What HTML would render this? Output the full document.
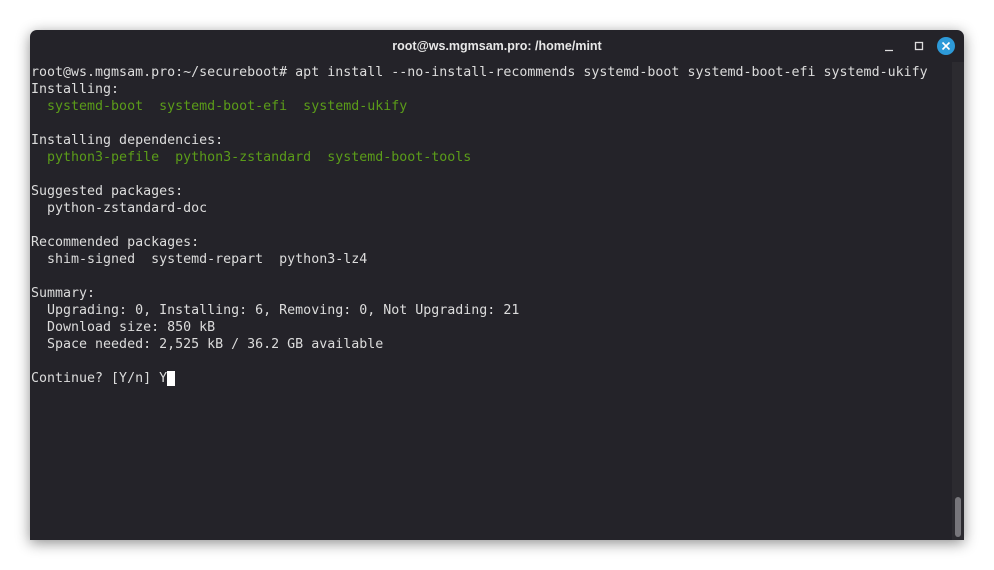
<!DOCTYPE html>
<html><head><meta charset="utf-8"><style>
html,body{margin:0;padding:0;width:994px;height:570px;background:#fff;overflow:hidden}
.win{position:absolute;left:30px;top:30px;width:934px;height:510px;background:#242329;border-radius:7px 7px 0 0;box-shadow:0 3px 14px rgba(0,0,0,.45);overflow:hidden}
.title{position:absolute;left:0;top:0;width:100%;height:32px;text-align:center;color:#e8e8e8;font:bold 12.5px "Liberation Sans",sans-serif;line-height:32px}
.sb{position:absolute;right:0;top:32px;width:12px;bottom:0;background:#2c2b30}
.thumb{position:absolute;left:3px;top:435px;width:6px;height:40px;border-radius:3px;background:#77767b}
pre{position:absolute;left:1px;top:34px;margin:0;color:#dcdcdc;font:13.3px/17px "DejaVu Sans Mono","Liberation Mono",monospace}
.g{color:#5b9c19}
.cur{background:#fff;color:#242329}
.close{position:absolute;left:907px;top:7px;width:18px;height:18px;border-radius:50%;background:#2d9ad8}
</style></head><body>
<div class="win">
<div class="title">root@ws.mgmsam.pro: /home/mint</div>
<svg style="position:absolute;left:850px;top:7px" width="80" height="18">
<line x1="5" y1="13.5" x2="13" y2="13.5" stroke="#ddd" stroke-width="1.3"/>
<rect x="35.5" y="5.5" width="7" height="7" fill="none" stroke="#ddd" stroke-width="1.3"/>
</svg>
<div class="close"><svg width="18" height="18"><path d="M5.5 5.5L12.5 12.5M12.5 5.5L5.5 12.5" stroke="#fff" stroke-width="1.6"/></svg></div>
<pre>root@ws.mgmsam.pro:~/secureboot# apt install --no-install-recommends systemd-boot systemd-boot-efi systemd-ukify
Installing:
<span class="g">  systemd-boot  systemd-boot-efi  systemd-ukify</span>

Installing dependencies:
<span class="g">  python3-pefile  python3-zstandard  systemd-boot-tools</span>

Suggested packages:
  python-zstandard-doc

Recommended packages:
  shim-signed  systemd-repart  python3-lz4

Summary:
  Upgrading: 0, Installing: 6, Removing: 0, Not Upgrading: 21
  Download size: 850 kB
  Space needed: 2,525 kB / 36.2 GB available

Continue? [Y/n] Y<span class="cur"> </span></pre>
<div class="sb"><div class="thumb"></div></div>
</div>
</body></html>
